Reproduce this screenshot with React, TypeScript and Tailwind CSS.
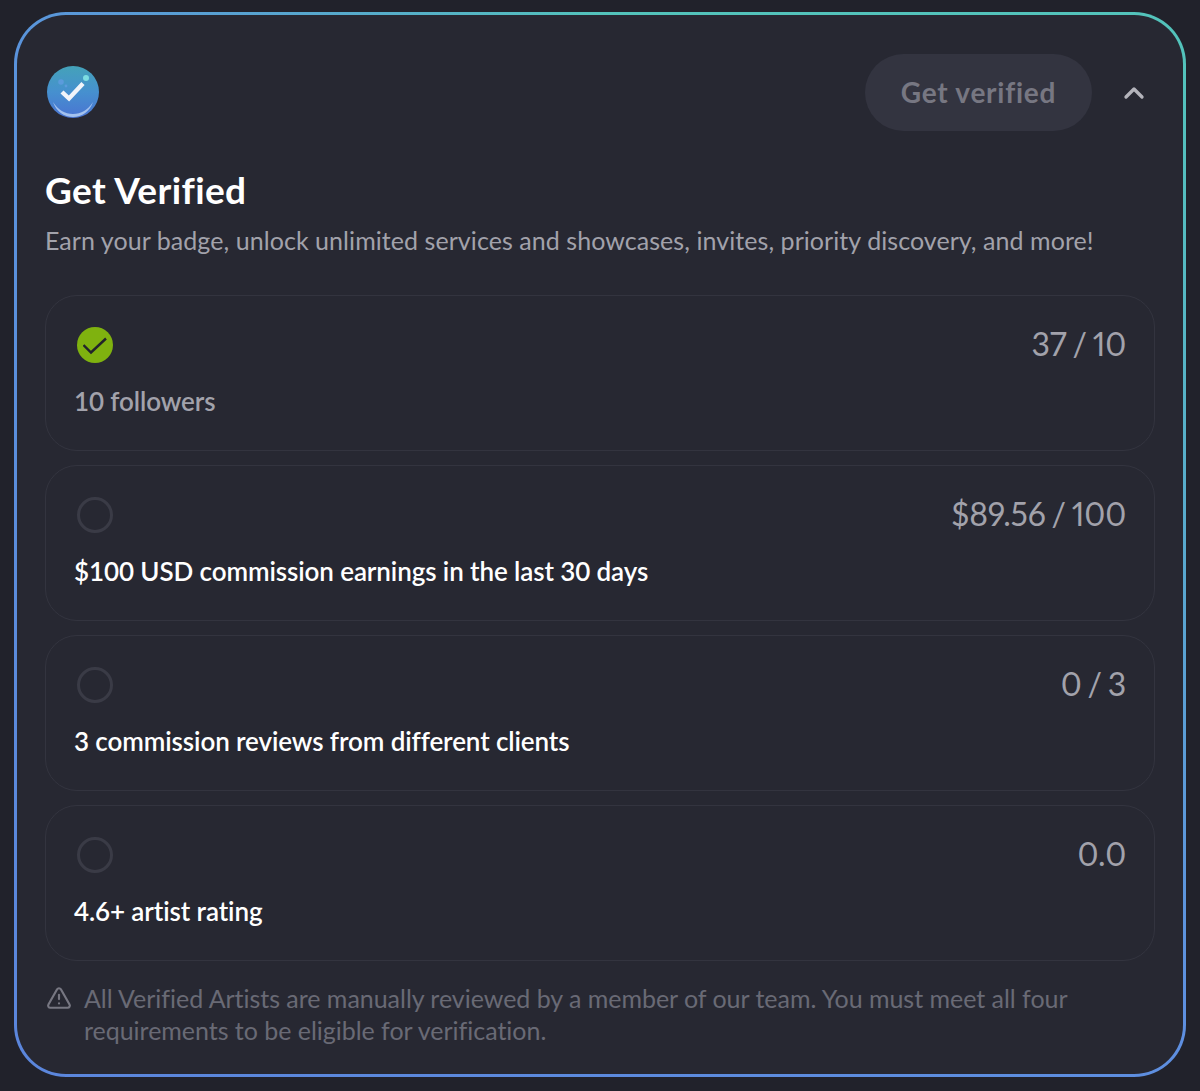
import { ChevronUp, TriangleAlert } from "lucide-react";

const requirements = [
  { label: "10 followers", value: "37 / 10", done: true },
  { label: "$100 USD commission earnings in the last 30 days", value: "$89.56 / 100", done: false },
  { label: "3 commission reviews from different clients", value: "0 / 3", done: false },
  { label: "4.6+ artist rating", value: "0.0", done: false },
];

function VerifiedBadge() {
  return (
    <svg width="54" height="54" viewBox="0 0 54 54" fill="none">
      <defs>
        <linearGradient id="badge" x1="27" y1="1" x2="27" y2="53" gradientUnits="userSpaceOnUse">
          <stop offset="0" stopColor="#44a2b9" />
          <stop offset="0.5" stopColor="#4690cf" />
          <stop offset="1" stopColor="#4a74d2" />
        </linearGradient>
      </defs>
      <circle cx="27" cy="27" r="26" fill="url(#badge)" />
      <path d="M7 37c5 8 12 12 20 12s15-4 20-12c-3 9-11 15-20 15S10 46 7 37z" fill="#a4c2ee" />
      <circle cx="40" cy="13" r="3" fill="#7ddde2" />
      <circle cx="15" cy="17" r="2.8" fill="#5b9bdc" />
      <circle cx="20" cy="21" r="1.4" fill="#5b9bdc" />
      <path d="M16 27l7 6.5L37 18.5" stroke="#f1f4fa" strokeWidth="4.4" />
    </svg>
  );
}

function Status({ done }: { done: boolean }) {
  if (!done) {
    return <div className="h-9 w-9 rounded-full border-[3px] border-[#3a3b46]" />;
  }
  return (
    <div className="flex h-9 w-9 items-center justify-center rounded-full bg-[#7fb20f]">
      <svg width="24" height="24" viewBox="0 0 24 24" fill="none" stroke="#22232b" strokeWidth="2.4">
        <path d="M0.5 12l7.5 7.5L23 5.5" />
      </svg>
    </div>
  );
}

export default function App() {
  return (
    <div className="min-h-[1091px] bg-[#21222b] px-[14px] pt-3 font-['Lato',sans-serif]">
      <div className="h-[1065px] rounded-[52px] border-[3px] border-transparent px-7 pt-[39px] [background:linear-gradient(#272832,#272832)_padding-box,conic-gradient(from_0deg_at_50%_50%,#53c3bb_0deg,#53c3bb_50deg,#5e8fe0_130deg,#5b86dc_230deg,#5a93dc_310deg,#53c3bb_360deg)_border-box]">
        <div className="flex items-start justify-between">
          <div className="ml-px mt-[11px]">
            <VerifiedBadge />
          </div>
          <div className="mr-[5px] flex items-center gap-[26px]">
            <button className="h-[77px] w-[227px] rounded-full bg-[#333440] pb-[2px] text-[28px] font-bold tracking-[0.75px] text-[#777782]">
              Get verified
            </button>
            <ChevronUp size={32} strokeWidth={2.5} className="text-[#b4b4bb]" />
          </div>
        </div>

        <h1 className="mt-[37px] text-[37px] font-bold leading-[44px] tracking-[0.4px] text-white">Get Verified</h1>
        <p className="mt-[10px] text-[25px] leading-[36px] tracking-[0.06px] text-[#a2a2ab]">
          Earn your badge, unlock unlimited services and showcases, invites, priority discovery, and more!
        </p>

        <div className="mt-[37px] flex flex-col gap-[14px]">
          {requirements.map((req) => (
            <div key={req.label} className="flex h-[156px] flex-col rounded-[32px] border border-[#33343f] pl-[28px] pr-7 pt-[31px]">
              <div className="flex items-start justify-between">
                <div className="ml-[3px]">
                  <Status done={req.done} />
                </div>
                <span className="-mt-px text-[32px] leading-[36px] tracking-[-0.2px] text-[#a2a2ab] [font-variant-numeric:proportional-nums] [word-spacing:-2px]">
                  {req.value}
                </span>
              </div>
              <p className={`mt-[20px] text-[26px] font-semibold leading-[36px] tracking-[-0.1px] ${req.done ? "text-[#a2a2ab]" : "text-white"}`}>
                {req.label}
              </p>
            </div>
          ))}
        </div>

        <div className="mt-[21px] flex items-start gap-[12px] pl-[1px]">
          <TriangleAlert size={26} strokeWidth={2} className="mt-[3px] shrink-0 text-[#777782]" />
          <p className="w-[1020px] text-[25px] leading-[32px] tracking-[-0.03px] text-[#696a75]">
            All Verified Artists are manually reviewed by a member of our team. You must meet all four requirements to be eligible for verification.
          </p>
        </div>
      </div>
    </div>
  );
}
